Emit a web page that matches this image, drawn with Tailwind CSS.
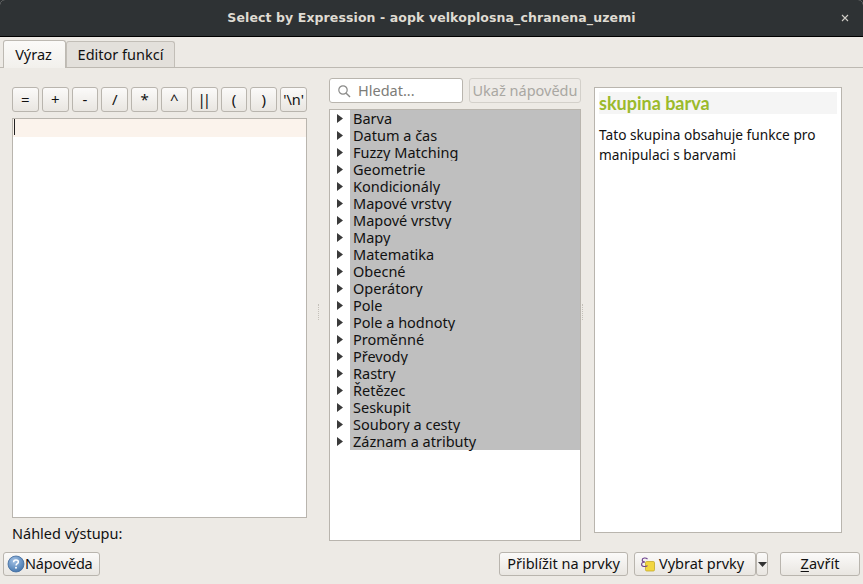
<!DOCTYPE html>
<html>
<head>
<meta charset="utf-8">
<script src="https://cdn.jsdelivr.net/npm/@tailwindcss/browser@4"></script>
</head>
<body class="bg-[#2d3133]">
<div class="w-[863px] h-[584px] overflow-hidden flex flex-col bg-[#edeae5] text-[#111] text-[14.5px] font-['Noto_Sans',sans-serif] rounded-t-[5px]">
  <header class="relative h-[37px] shrink-0 bg-[#2e3234] border-b border-black flex items-center justify-center pt-px">
    <span class="font-['DejaVu_Sans',sans-serif] font-bold text-[12.5px] tracking-[0.1px] text-[#dfdbd2]">Select by Expression - aopk velkoplosna_chranena_uzemi</span>
    <svg class="absolute right-[14px] top-[14px] w-[8px] h-[8px]" viewBox="0 0 8 8"><path d="M1 1L7 7M7 1L1 7" stroke="#cfccc6" stroke-width="1.1"/></svg>
  </header>

  <nav class="h-[31px] shrink-0 flex items-end pl-[3px] border-b border-[#bdb9b2] relative">
    <div class="h-[28px] w-[63px] -mb-px bg-gradient-to-b from-[#fbfaf8] to-[#f2f0ec] border border-b-0 border-[#bdb9b2] rounded-t-[3px] flex items-center justify-center relative z-10 pr-[2px]">Výraz</div>
    <div class="h-[26px] w-[109px] bg-[#e3e0db] border border-b-0 border-[#c2beb7] rounded-t-[3px] flex items-center justify-center">Editor funkcí</div>
  </nav>

  <main class="flex-1 flex min-h-0 pt-[10px] pl-[12px] pr-[21px]">
    <section class="w-[295px] shrink-0 flex flex-col">
      <div class="grid grid-cols-10 gap-[3px] mt-[9px] h-[25px] shrink-0">
        <button class="rounded-[3px] border border-[#b9b5ae] bg-gradient-to-b from-[#fbfaf9] to-[#e9e6e1] flex items-center justify-center text-[15px]">=</button>
        <button class="rounded-[3px] border border-[#b9b5ae] bg-gradient-to-b from-[#fbfaf9] to-[#e9e6e1] flex items-center justify-center text-[15px]">+</button>
        <button class="rounded-[3px] border border-[#b9b5ae] bg-gradient-to-b from-[#fbfaf9] to-[#e9e6e1] flex items-center justify-center text-[15px]">-</button>
        <button class="rounded-[3px] border border-[#b9b5ae] bg-gradient-to-b from-[#fbfaf9] to-[#e9e6e1] flex items-center justify-center text-[15px]">/</button>
        <button class="rounded-[3px] border border-[#b9b5ae] bg-gradient-to-b from-[#fbfaf9] to-[#e9e6e1] flex items-center justify-center text-[15px]">*</button>
        <button class="rounded-[3px] border border-[#b9b5ae] bg-gradient-to-b from-[#fbfaf9] to-[#e9e6e1] flex items-center justify-center text-[15px]">^</button>
        <button class="rounded-[3px] border border-[#b9b5ae] bg-gradient-to-b from-[#fbfaf9] to-[#e9e6e1] flex items-center justify-center text-[15px] tracking-[-3px] pr-[3px]">||</button>
        <button class="rounded-[3px] border border-[#b9b5ae] bg-gradient-to-b from-[#fbfaf9] to-[#e9e6e1] flex items-center justify-center text-[15px]">(</button>
        <button class="rounded-[3px] border border-[#b9b5ae] bg-gradient-to-b from-[#fbfaf9] to-[#e9e6e1] flex items-center justify-center text-[15px]">)</button>
        <button class="rounded-[3px] border border-[#b9b5ae] bg-gradient-to-b from-[#fbfaf9] to-[#e9e6e1] flex items-center justify-center text-[14.5px]">'\n'</button>
      </div>
      <div class="mt-[6px] h-[400px] bg-white border border-[#b9b5ae] relative shrink-0">
        <div class="h-[18px] bg-[#fbf3ec] flex">
          <div class="ml-[1px] w-px h-[16px] bg-[#222]"></div>
        </div>
      </div>
      <div class="mt-[5px] leading-[20px]">Náhled výstupu:</div>
    </section>

    <div class="w-[22px] shrink-0 flex items-center justify-center pb-[7px]">
      <div class="h-[16px] border-l border-dotted border-[#c4c0b9]"></div>
    </div>

    <section class="w-[252px] shrink-0 flex flex-col">
      <div class="flex gap-[6px] h-[25px] shrink-0">
        <div class="w-[134px] bg-white border border-[#b9b5ae] rounded-[3px] flex items-center">
          <svg class="ml-[7px] w-[14px] h-[14px]" viewBox="0 0 14 14" fill="none"><circle cx="6" cy="6" r="4.2" stroke="#8a8a88" stroke-width="1.2"/><path d="M9.2 9.2L13 13" stroke="#8a8a88" stroke-width="1.4"/></svg>
          <span class="ml-[7px] text-[#7d7c78]">Hledat...</span>
        </div>
        <div class="flex-1 rounded-[3px] border border-[#d3d0ca] bg-[#eeebe7] flex items-center justify-center text-[#a9a7a2] whitespace-nowrap">Ukaž nápovědu</div>
      </div>
      <div class="mt-[6px] h-[432px] bg-white border border-[#b9b5ae] shrink-0">
        <ul class="leading-[17px] text-[14.5px]">
          <li class="flex h-[17px]"><span class="w-[20px] flex items-center justify-end pr-[7px]"><svg class="w-[6px] h-[9px]" viewBox="0 0 6 9"><path d="M0 0L6 4.5L0 9Z" fill="#3a3a3a"/></svg></span><span class="flex-1 bg-[#bfbfbf] pl-[3px] whitespace-nowrap">Barva</span></li>
          <li class="flex h-[17px]"><span class="w-[20px] flex items-center justify-end pr-[7px]"><svg class="w-[6px] h-[9px]" viewBox="0 0 6 9"><path d="M0 0L6 4.5L0 9Z" fill="#3a3a3a"/></svg></span><span class="flex-1 bg-[#bfbfbf] pl-[3px] whitespace-nowrap">Datum a čas</span></li>
          <li class="flex h-[17px]"><span class="w-[20px] flex items-center justify-end pr-[7px]"><svg class="w-[6px] h-[9px]" viewBox="0 0 6 9"><path d="M0 0L6 4.5L0 9Z" fill="#3a3a3a"/></svg></span><span class="flex-1 bg-[#bfbfbf] pl-[3px] whitespace-nowrap">Fuzzy Matching</span></li>
          <li class="flex h-[17px]"><span class="w-[20px] flex items-center justify-end pr-[7px]"><svg class="w-[6px] h-[9px]" viewBox="0 0 6 9"><path d="M0 0L6 4.5L0 9Z" fill="#3a3a3a"/></svg></span><span class="flex-1 bg-[#bfbfbf] pl-[3px] whitespace-nowrap">Geometrie</span></li>
          <li class="flex h-[17px]"><span class="w-[20px] flex items-center justify-end pr-[7px]"><svg class="w-[6px] h-[9px]" viewBox="0 0 6 9"><path d="M0 0L6 4.5L0 9Z" fill="#3a3a3a"/></svg></span><span class="flex-1 bg-[#bfbfbf] pl-[3px] whitespace-nowrap">Kondicionály</span></li>
          <li class="flex h-[17px]"><span class="w-[20px] flex items-center justify-end pr-[7px]"><svg class="w-[6px] h-[9px]" viewBox="0 0 6 9"><path d="M0 0L6 4.5L0 9Z" fill="#3a3a3a"/></svg></span><span class="flex-1 bg-[#bfbfbf] pl-[3px] whitespace-nowrap">Mapové vrstvy</span></li>
          <li class="flex h-[17px]"><span class="w-[20px] flex items-center justify-end pr-[7px]"><svg class="w-[6px] h-[9px]" viewBox="0 0 6 9"><path d="M0 0L6 4.5L0 9Z" fill="#3a3a3a"/></svg></span><span class="flex-1 bg-[#bfbfbf] pl-[3px] whitespace-nowrap">Mapové vrstvy</span></li>
          <li class="flex h-[17px]"><span class="w-[20px] flex items-center justify-end pr-[7px]"><svg class="w-[6px] h-[9px]" viewBox="0 0 6 9"><path d="M0 0L6 4.5L0 9Z" fill="#3a3a3a"/></svg></span><span class="flex-1 bg-[#bfbfbf] pl-[3px] whitespace-nowrap">Mapy</span></li>
          <li class="flex h-[17px]"><span class="w-[20px] flex items-center justify-end pr-[7px]"><svg class="w-[6px] h-[9px]" viewBox="0 0 6 9"><path d="M0 0L6 4.5L0 9Z" fill="#3a3a3a"/></svg></span><span class="flex-1 bg-[#bfbfbf] pl-[3px] whitespace-nowrap">Matematika</span></li>
          <li class="flex h-[17px]"><span class="w-[20px] flex items-center justify-end pr-[7px]"><svg class="w-[6px] h-[9px]" viewBox="0 0 6 9"><path d="M0 0L6 4.5L0 9Z" fill="#3a3a3a"/></svg></span><span class="flex-1 bg-[#bfbfbf] pl-[3px] whitespace-nowrap">Obecné</span></li>
          <li class="flex h-[17px]"><span class="w-[20px] flex items-center justify-end pr-[7px]"><svg class="w-[6px] h-[9px]" viewBox="0 0 6 9"><path d="M0 0L6 4.5L0 9Z" fill="#3a3a3a"/></svg></span><span class="flex-1 bg-[#bfbfbf] pl-[3px] whitespace-nowrap">Operátory</span></li>
          <li class="flex h-[17px]"><span class="w-[20px] flex items-center justify-end pr-[7px]"><svg class="w-[6px] h-[9px]" viewBox="0 0 6 9"><path d="M0 0L6 4.5L0 9Z" fill="#3a3a3a"/></svg></span><span class="flex-1 bg-[#bfbfbf] pl-[3px] whitespace-nowrap">Pole</span></li>
          <li class="flex h-[17px]"><span class="w-[20px] flex items-center justify-end pr-[7px]"><svg class="w-[6px] h-[9px]" viewBox="0 0 6 9"><path d="M0 0L6 4.5L0 9Z" fill="#3a3a3a"/></svg></span><span class="flex-1 bg-[#bfbfbf] pl-[3px] whitespace-nowrap">Pole a hodnoty</span></li>
          <li class="flex h-[17px]"><span class="w-[20px] flex items-center justify-end pr-[7px]"><svg class="w-[6px] h-[9px]" viewBox="0 0 6 9"><path d="M0 0L6 4.5L0 9Z" fill="#3a3a3a"/></svg></span><span class="flex-1 bg-[#bfbfbf] pl-[3px] whitespace-nowrap">Proměnné</span></li>
          <li class="flex h-[17px]"><span class="w-[20px] flex items-center justify-end pr-[7px]"><svg class="w-[6px] h-[9px]" viewBox="0 0 6 9"><path d="M0 0L6 4.5L0 9Z" fill="#3a3a3a"/></svg></span><span class="flex-1 bg-[#bfbfbf] pl-[3px] whitespace-nowrap">Převody</span></li>
          <li class="flex h-[17px]"><span class="w-[20px] flex items-center justify-end pr-[7px]"><svg class="w-[6px] h-[9px]" viewBox="0 0 6 9"><path d="M0 0L6 4.5L0 9Z" fill="#3a3a3a"/></svg></span><span class="flex-1 bg-[#bfbfbf] pl-[3px] whitespace-nowrap">Rastry</span></li>
          <li class="flex h-[17px]"><span class="w-[20px] flex items-center justify-end pr-[7px]"><svg class="w-[6px] h-[9px]" viewBox="0 0 6 9"><path d="M0 0L6 4.5L0 9Z" fill="#3a3a3a"/></svg></span><span class="flex-1 bg-[#bfbfbf] pl-[3px] whitespace-nowrap">Řetězec</span></li>
          <li class="flex h-[17px]"><span class="w-[20px] flex items-center justify-end pr-[7px]"><svg class="w-[6px] h-[9px]" viewBox="0 0 6 9"><path d="M0 0L6 4.5L0 9Z" fill="#3a3a3a"/></svg></span><span class="flex-1 bg-[#bfbfbf] pl-[3px] whitespace-nowrap">Seskupit</span></li>
          <li class="flex h-[17px]"><span class="w-[20px] flex items-center justify-end pr-[7px]"><svg class="w-[6px] h-[9px]" viewBox="0 0 6 9"><path d="M0 0L6 4.5L0 9Z" fill="#3a3a3a"/></svg></span><span class="flex-1 bg-[#bfbfbf] pl-[3px] whitespace-nowrap">Soubory a cesty</span></li>
          <li class="flex h-[17px]"><span class="w-[20px] flex items-center justify-end pr-[7px]"><svg class="w-[6px] h-[9px]" viewBox="0 0 6 9"><path d="M0 0L6 4.5L0 9Z" fill="#3a3a3a"/></svg></span><span class="flex-1 bg-[#bfbfbf] pl-[3px] whitespace-nowrap">Záznam a atributy</span></li>
        </ul>
      </div>
    </section>

    <div class="w-[13px] shrink-0 flex items-center justify-start pl-[1px] pb-[7px]">
      <div class="h-[16px] border-l border-dotted border-[#c4c0b9]"></div>
    </div>

    <aside class="w-[248px] h-[446px] mt-[9px] shrink-0 bg-white border border-[#b9b5ae] px-[4px] pt-[4px]">
      <h2 class="h-[22px] bg-[#f5f5f5] font-['Lato',sans-serif] font-bold text-[18px] leading-[22px] text-[#9bba2b]">skupina barva</h2>
      <p class="mt-[11px] leading-[20px] text-[13.7px]">Tato skupina obsahuje funkce pro<br>manipulaci s barvami</p>
    </aside>
  </main>

  <footer class="h-[28px] shrink-0 mb-[4px] flex items-start pl-[3px] pr-[3px]">
    <button class="w-[97px] h-[24px] rounded-[3px] border border-[#b9b5ae] bg-gradient-to-b from-[#fbfaf9] to-[#e9e6e1] flex items-center pl-[3px]">
      <svg class="w-[18px] h-[18px] shrink-0" viewBox="0 0 18 18"><defs><radialGradient id="h" cx="0.4" cy="0.3" r="0.8"><stop offset="0" stop-color="#a5c3e6"/><stop offset="1" stop-color="#3a6ea8"/></radialGradient></defs><circle cx="9" cy="9" r="8" fill="url(#h)" stroke="#3f6a9c" stroke-width="0.8"/><path d="M6.6 7.2C6.6 5.7 7.7 5 9 5c1.4 0 2.4.8 2.4 2 0 1.7-2.3 1.7-2.3 3.4" fill="none" stroke="#fff" stroke-width="1.5"/><circle cx="9" cy="12.7" r="1" fill="#fff"/></svg>
      <span class="tracking-[-0.2px]">Nápověda</span>
    </button>
    <button class="ml-[399px] w-[129px] h-[24px] rounded-[3px] border border-[#b9b5ae] bg-gradient-to-b from-[#fbfaf9] to-[#e9e6e1] flex items-center justify-center whitespace-nowrap">Přiblížit na prvky</button>
    <button class="ml-[6px] w-[122px] h-[24px] rounded-[3px] border border-[#b9b5ae] bg-gradient-to-b from-[#fbfaf9] to-[#e9e6e1] flex items-center pl-[5px] whitespace-nowrap">
      <svg class="w-[15px] h-[15px] shrink-0" viewBox="0 0 15 15"><rect x="5.5" y="4.5" width="9" height="9.5" rx="1.2" fill="#f2d640" stroke="#c4a92a" stroke-width="0.8"/><path d="M7.5 2C6 .6 2.2 .6 2.2 3C2.2 4.4 3.5 5 5 5C3 5 1.6 5.6 1.6 7.4C1.6 10 6 10 7.5 8.6" fill="none" stroke="#6b3f8c" stroke-width="1.1"/></svg>
      <span class="ml-[4px]">Vybrat prvky</span>
    </button>
    <button class="w-[12px] h-[24px] rounded-[3px] border border-[#b9b5ae] bg-gradient-to-b from-[#fbfaf9] to-[#e9e6e1] flex items-center justify-center">
      <svg class="w-[9px] h-[5px]" viewBox="0 0 9 5"><path d="M0 0H9L4.5 5Z" fill="#333"/></svg>
    </button>
    <button class="ml-[12px] w-[80px] h-[24px] rounded-[3px] border border-[#b9b5ae] bg-gradient-to-b from-[#fbfaf9] to-[#e9e6e1] flex items-center justify-center whitespace-nowrap"><span><span class="underline underline-offset-2">Z</span>avřít</span></button>
  </footer>
</div>
</body>
</html>
